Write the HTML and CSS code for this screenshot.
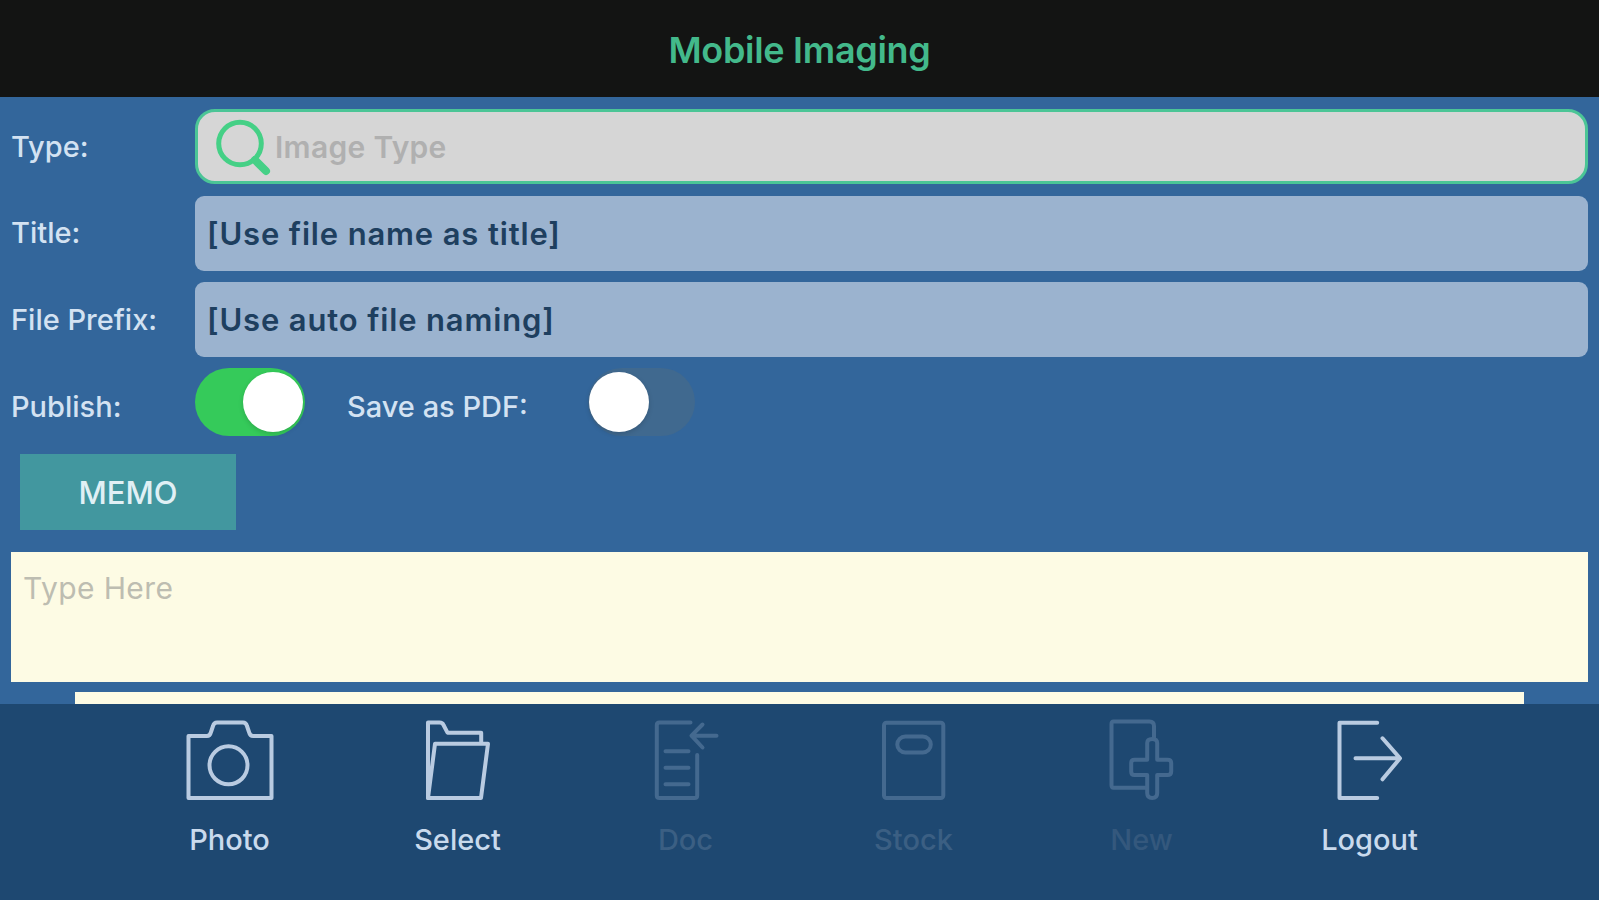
FILE: index.html
```html
<!DOCTYPE html>
<html lang="en">
<head>
    <meta charset="UTF-8"/>
    <meta name="viewport" content="width=device-width, initial-scale=1.0"/>
    <title>Mobile Imaging</title>
    <link rel="stylesheet" href="styles.css">
</head>
<body>

<header>
    <h1>Mobile Imaging</h1>
</header>

<main>
    <div class="row">
        <span class="label">Type:</span>
        <div class="field search">
            <svg class="search-icon" width="58" height="58" viewBox="0 0 58 58">
                <circle cx="25" cy="25.500" r="21.300"/>
                <path class="handle" d="M40 42L51 53"/>
            </svg>
            <span>Image Type</span>
        </div>
    </div>
    <div class="row">
        <span class="label">Title:</span>
        <div class="field">[Use file name as title]</div>
    </div>
    <div class="row">
        <span class="label">File Prefix:</span>
        <div class="field">[Use auto file naming]</div>
    </div>
    <div class="row switches">
        <span class="label">Publish:</span>
        <div class="switch on"></div>
        <span class="label pdf">Save as PDF:</span>
        <div class="switch"></div>
    </div>
    <button class="memo-button">MEMO</button>
    <div class="memo">Type Here</div>
    <div class="next-panel"></div>
</main>

<footer>
    <a class="tool">
        <svg width="100" height="92" viewBox="0 0 100 92">
            <path d="M8.500 21H27Q30 21 31 17L33 11Q34 7.500 37 7.500H63Q66 7.500 67 11L69 17Q70 21 73 21H91.500V83H8.500Z"/>
            <circle cx="48.500" cy="50.300" r="19"/>
        </svg>
        <span>Photo</span>
    </a>
    <a class="tool">
        <svg width="100" height="92" viewBox="1.500 0 100 92">
            <path d="M21.500 83V7.500H33Q36 7.500 37 10L41 17.700H74.700V28"/>
            <path d="M21.500 83L28.500 28.700H81.500L74.500 83Z"/>
        </svg>
        <span>Select</span>
    </a>
    <a class="tool disabled">
        <svg width="100" height="92" viewBox="1.500 0 100 92">
            <path d="M56 7.500H25Q22.300 7.500 22.300 10V80.500Q22.300 83 25 83H60Q62.700 83 62.700 80.500V40"/>
            <path d="M82 20.700H57M68 9.500L57 20.700L68 32.500"/>
            <path d="M31 36.300H54M31 52.700H54M31 69.300H54"/>
        </svg>
        <span>Doc</span>
    </a>
    <a class="tool disabled">
        <svg width="100" height="92" viewBox="1 0 100 92">
            <rect x="21" y="7.700" width="59.300" height="75.300" rx="2.500"/>
            <rect x="34.300" y="21.500" width="33.500" height="16" rx="8"/>
        </svg>
        <span>Stock</span>
    </a>
    <a class="tool disabled new">
        <svg width="100" height="92" viewBox="1.500 1 100 92">
            <path d="M56 73.700H23Q21 73.700 21 71V10Q21 7.500 23 7.500H59Q63.500 7.500 63.500 12V25"/>
            <path d="M56.700 45.700V29Q56.700 25 61.700 25T66.700 29V45.700H77Q80.700 45.700 80.700 49V57.500Q80.700 61 77 61H66.700V79Q66.700 84 61.700 84T56.700 79V61H44Q40.700 61 40.700 57.500V49Q40.700 45.700 44 45.700Z"/>
        </svg>
        <span>New</span>
    </a>
    <a class="tool">
        <svg width="100" height="92" viewBox="1.500 0 100 92">
            <path d="M58.700 7.700H21V83H58.700"/>
            <path d="M37 43.300H81M64 23.300L81.500 43.300L64 64.300"/>
        </svg>
        <span>Logout</span>
    </a>
</footer>

</body>
</html>
```
FILE: styles.css
```css
* {
    box-sizing: border-box;
}

body {
    font-family: Inter, "Liberation Sans", sans-serif;
    margin: 0;
    width: 1599px;
    height: 900px;
    overflow: hidden;
    background: #33669b;
    color: #d3e2f2;
}

header {
    height: 97px;
    padding-top: 2px;
    display: flex;
    align-items: center;
    justify-content: center;
    background: #131413;
}

h1 {
    margin: 0;
    font-size: 36px;
    line-height: 44px;
    font-weight: 600;
    letter-spacing: -0.3px;
    color: #43b98b;
}

main {
    height: 607px;
    padding: 12px 11px 0;
    overflow: hidden;
}

.row {
    display: flex;
    align-items: center;
    height: 75px;
    margin-bottom: 11.5px;
}

.label {
    width: 184px;
    font-size: 29px;
    line-height: 36px;
    font-weight: 500;
    white-space: nowrap;
}

.field {
    flex: 1;
    height: 75px;
    padding-left: 12px;
    display: flex;
    align-items: center;
    border-radius: 9px;
    background: #9bb3cf;
    color: #1e3f5f;
    font-size: 31px;
    font-weight: 600;
    letter-spacing: 0.85px;
}

.search {
    padding-left: 17px;
    border: 3px solid #4bc596;
    border-radius: 20px;
    background: #d6d6d6;
    color: #b0b0b0;
    font-size: 30px;
    letter-spacing: 0.3px;
}

.search-icon {
    margin-right: 2px;
    fill: none;
    stroke: #45d086;
    stroke-width: 5;
    stroke-linecap: round;
}

.search-icon .handle {
    stroke-width: 8;
}

.switches {
    height: 68px;
    margin: -1px 0 18px;
}

.switches .label {
    padding-top: 11px;
}

.switches .pdf {
    width: 241px;
    margin-left: 42px;
}

.switch {
    width: 110px;
    height: 68px;
    padding: 4px 2px 4px 1px;
    display: flex;
    border-radius: 34px;
    background: #40698f;
}

.switch::before {
    content: "";
    width: 60px;
    height: 60px;
    border-radius: 50%;
    background: #fff;
    box-shadow: 0 2px 5px rgba(0, 0, 0, 0.15);
}

.switch:last-child {
    width: 107px;
}

.switch.on {
    justify-content: flex-end;
    background: #35ca5a;
}

.memo-button {
    display: block;
    width: 216px;
    height: 76px;
    margin: 0 0 22px 9px;
    padding: 2px 0 0;
    border: 0;
    background: #42979f;
    color: #e0f0f5;
    font-family: inherit;
    font-size: 31px;
    font-weight: 500;
}

.memo {
    height: 130px;
    padding: 18px 12px;
    background: #fdfbe4;
    color: #bdbdb1;
    font-size: 30px;
    line-height: 36px;
    letter-spacing: 0.4px;
}

/* top edge of the panel that scrolls under the toolbar */
.next-panel {
    height: 40px;
    margin: 10px 64px 0;
    background: #fdfbe4;
}

footer {
    height: 196px;
    padding: 11px 115.5px 0;
    display: flex;
    background: #1e4871;
}

.tool {
    flex: 1;
    display: flex;
    flex-direction: column;
    align-items: center;
    color: #c9daed;
    font-size: 29px;
    line-height: 36px;
    font-weight: 500;
}

.tool svg {
    margin-bottom: 15px;
    fill: none;
    stroke: #b9cbe1;
    stroke-width: 4;
    stroke-linecap: round;
    stroke-linejoin: round;
}

.disabled {
    color: #3b5f83;
}

.disabled svg {
    stroke: #44698f;
}

.new {
    color: #34587d;
}
```
